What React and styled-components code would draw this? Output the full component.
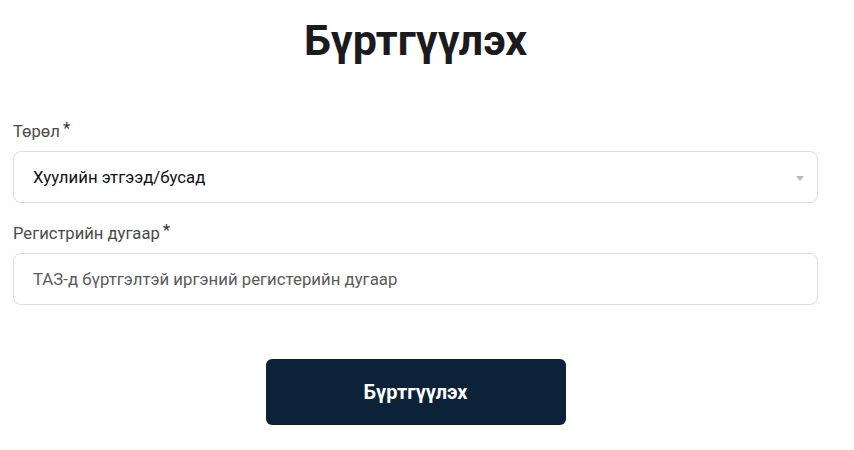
import React from "react";
import styled, { createGlobalStyle } from "styled-components";

const GlobalStyle = createGlobalStyle`
  * { box-sizing: border-box; }
  body {
    margin: 0;
    background: #fff;
    font-family: Roboto, "Noto Sans", sans-serif;
  }
`;

const Page = styled.div`
  width: 805px;
  margin-left: 13px;
  padding-top: 14px;
`;

const Title = styled.h1`
  margin: 0 0 56px;
  text-align: center;
  font-size: 43px;
  font-weight: 700;
  line-height: 52px;
  color: #1b1b1f;
`;

const Field = styled.div`
  display: flex;
  flex-direction: column;
  gap: 9px;
  margin-bottom: 21px;
`;

const Label = styled.label`
  font-size: 16.6px;
  color: #4a4a4a;
  line-height: 20px;
  display: flex;
  align-items: flex-start;
`;

const Star = styled.span`
  margin-left: 3px;
  font-size: 17px;
  line-height: 12px;
  color: #333;
`;

const Box = styled.div`
  position: relative;
  height: 52px;
  border: 1px solid #dcdcdc;
  border-radius: 8px;
  display: flex;
  align-items: center;
  padding: 0 19px;
  font-size: 16.8px;
  color: ${(p) => (p.$placeholder ? "#5a5a5a" : "#111")};
`;

const Caret = styled.span`
  position: absolute;
  right: 13px;
  top: 24px;
  width: 0;
  height: 0;
  border-left: 4px solid transparent;
  border-right: 4px solid transparent;
  border-top: 5px solid #b8b8b8;
`;

const Actions = styled.div`
  display: flex;
  justify-content: center;
  padding-top: 33px;
`;

const Button = styled.button`
  width: 300px;
  height: 66px;
  border: none;
  border-radius: 6px;
  background: #0b2239;
  color: #fff;
  font-family: Roboto, sans-serif;
  font-size: 20px;
  font-weight: 700;
  cursor: pointer;
`;

export default function App() {
  return (
    <>
      <GlobalStyle />
      <Page>
        <Title>Бүртгүүлэх</Title>
        <Field>
          <Label>
            Төрөл<Star>*</Star>
          </Label>
          <Box>
            Хуулийн этгээд/бусад
            <Caret />
          </Box>
        </Field>
        <Field>
          <Label>
            Регистрийн дугаар<Star>*</Star>
          </Label>
          <Box $placeholder>ТАЗ-д бүртгэлтэй иргэний регистерийн дугаар</Box>
        </Field>
        <Actions>
          <Button>Бүртгүүлэх</Button>
        </Actions>
      </Page>
    </>
  );
}
